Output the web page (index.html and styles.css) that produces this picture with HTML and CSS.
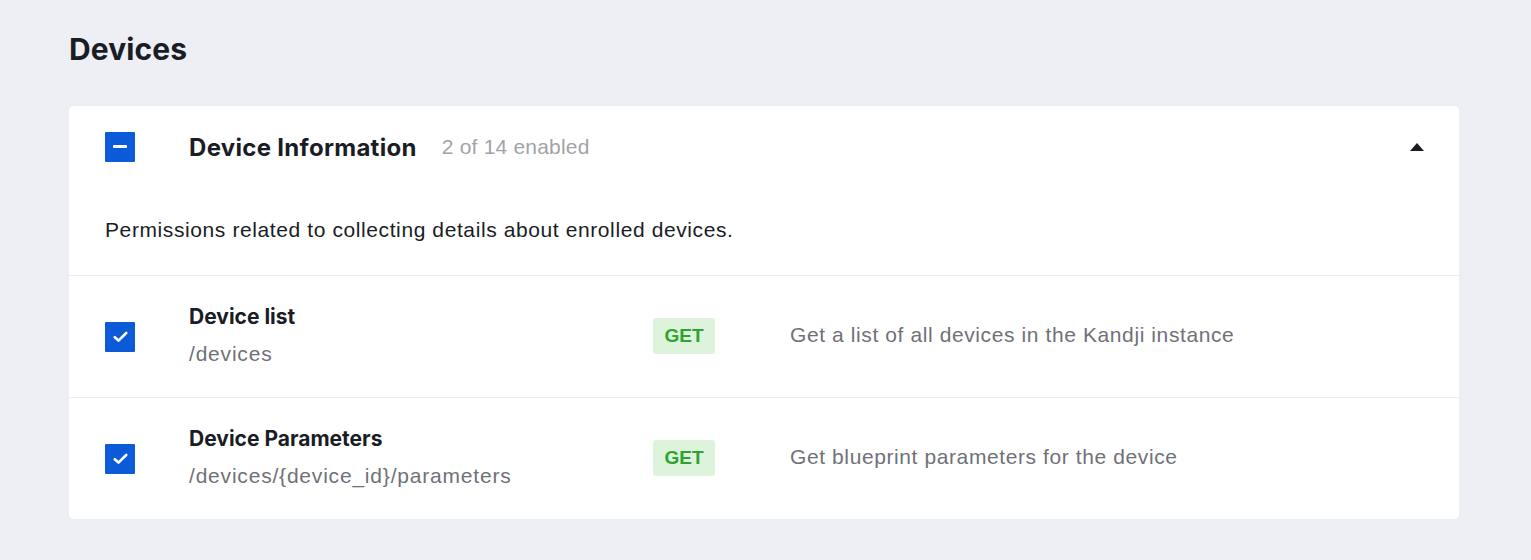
FILE: index.html
```html
<!DOCTYPE html>
<html>
<head>
<meta charset="utf-8">
<link rel="stylesheet" href="styles.css">
</head>
<body>
<main class="page">
  <h1 class="page-title">Devices</h1>
  <section class="card">
    <div class="group-head">
      <span class="checkbox"><svg width="14" height="4" viewBox="0 0 14 4"><rect x="0" y="0" width="14" height="3" rx="1" fill="#fff"/></svg></span>
      <h2 class="group-title">Device Information</h2>
      <span class="group-count">2 of 14 enabled</span>
      <span class="caret"><svg width="14" height="8" viewBox="0 0 14 8"><path d="M7 0 L14 8 L0 8 Z" fill="#1a1c26"/></svg></span>
    </div>
    <p class="group-desc">Permissions related to collecting details about enrolled devices.</p>
    <div class="perm">
      <span class="checkbox"><svg width="15" height="12" viewBox="0 0 15 12"><path d="M1.8 6.2 L5.5 9.6 L13.2 2" fill="none" stroke="#fff" stroke-width="2.6" stroke-linecap="round" stroke-linejoin="round"/></svg></span>
      <div class="perm-name">
        <div class="perm-title">Device list</div>
        <div class="perm-path">/devices</div>
      </div>
      <div class="perm-method"><span class="badge">GET</span></div>
      <div class="perm-desc">Get a list of all devices in the Kandji instance</div>
    </div>
    <div class="perm">
      <span class="checkbox"><svg width="15" height="12" viewBox="0 0 15 12"><path d="M1.8 6.2 L5.5 9.6 L13.2 2" fill="none" stroke="#fff" stroke-width="2.6" stroke-linecap="round" stroke-linejoin="round"/></svg></span>
      <div class="perm-name">
        <div class="perm-title">Device Parameters</div>
        <div class="perm-path">/devices/{device_id}/parameters</div>
      </div>
      <div class="perm-method"><span class="badge">GET</span></div>
      <div class="perm-desc">Get blueprint parameters for the device</div>
    </div>
  </section>
</main>
</body>
</html>
```

FILE: styles.css
```css
* { box-sizing: border-box; }
html, body { margin: 0; padding: 0; }
body {
  background: #eeeff4;
  font-family: "Liberation Sans", Arial, sans-serif;
  color: #1a1c26;
}
.page {
  padding: 32px 72px 40px 69px;
}
.page-title {
  margin: 0 0 40px 0;
  font-family: Inter, "Liberation Sans", sans-serif;
  font-size: 30px;
  font-weight: 700;
  line-height: 34px;
  letter-spacing: 0.1px;
  color: #1a1c26;
}
.card {
  background: #fff;
  border-radius: 5px;
  width: 1390px;
}
.group-head {
  display: flex;
  align-items: center;
  height: 82px;
  padding: 0 35px 0 36px;
}
.checkbox {
  width: 30px;
  height: 30px;
  flex: 0 0 30px;
  background: #0b5bd8;
  border-radius: 1px;
  display: flex;
  align-items: center;
  justify-content: center;
}
.group-title {
  margin: 0 0 0 54px;
  font-family: Inter, "Liberation Sans", sans-serif;
  font-size: 24px;
  font-weight: 700;
  letter-spacing: 0.3px;
}
.group-count {
  margin-left: 25px;
  font-size: 21px;
  letter-spacing: 0.2px;
  color: #a2a3a8;
}
.caret {
  margin-left: auto;
  display: flex;
}
.group-desc {
  margin: 0;
  padding: 30px 36px 33px;
  font-size: 21px;
  letter-spacing: 0.6px;
  line-height: 24px;
  color: #1a1c26;
}
.perm {
  display: flex;
  align-items: center;
  height: 122px;
  padding: 0 36px;
  border-top: 1px solid #ececef;
}
.perm-name {
  margin-left: 54px;
  width: 464px;
  margin-top: -3px;
}
.perm-title {
  font-family: Inter, "Liberation Sans", sans-serif;
  font-size: 21px;
  font-weight: 700;
  line-height: 24px;
  margin-bottom: 13px;
}
.perm-path {
  font-size: 21px;
  letter-spacing: 0.8px;
  color: #707178;
  line-height: 24px;
}
.perm-method {
  width: 137px;
  margin-top: -1px;
}
.badge {
  display: inline-block;
  background: #ddf3dc;
  color: #2ea32e;
  font-weight: 700;
  font-size: 19px;
  line-height: 36px;
  width: 62px;
  text-align: center;
  border-radius: 3px;
}
.perm-desc {
  font-size: 21px;
  letter-spacing: 0.6px;
  color: #707178;
  margin-top: -3px;
}
```
